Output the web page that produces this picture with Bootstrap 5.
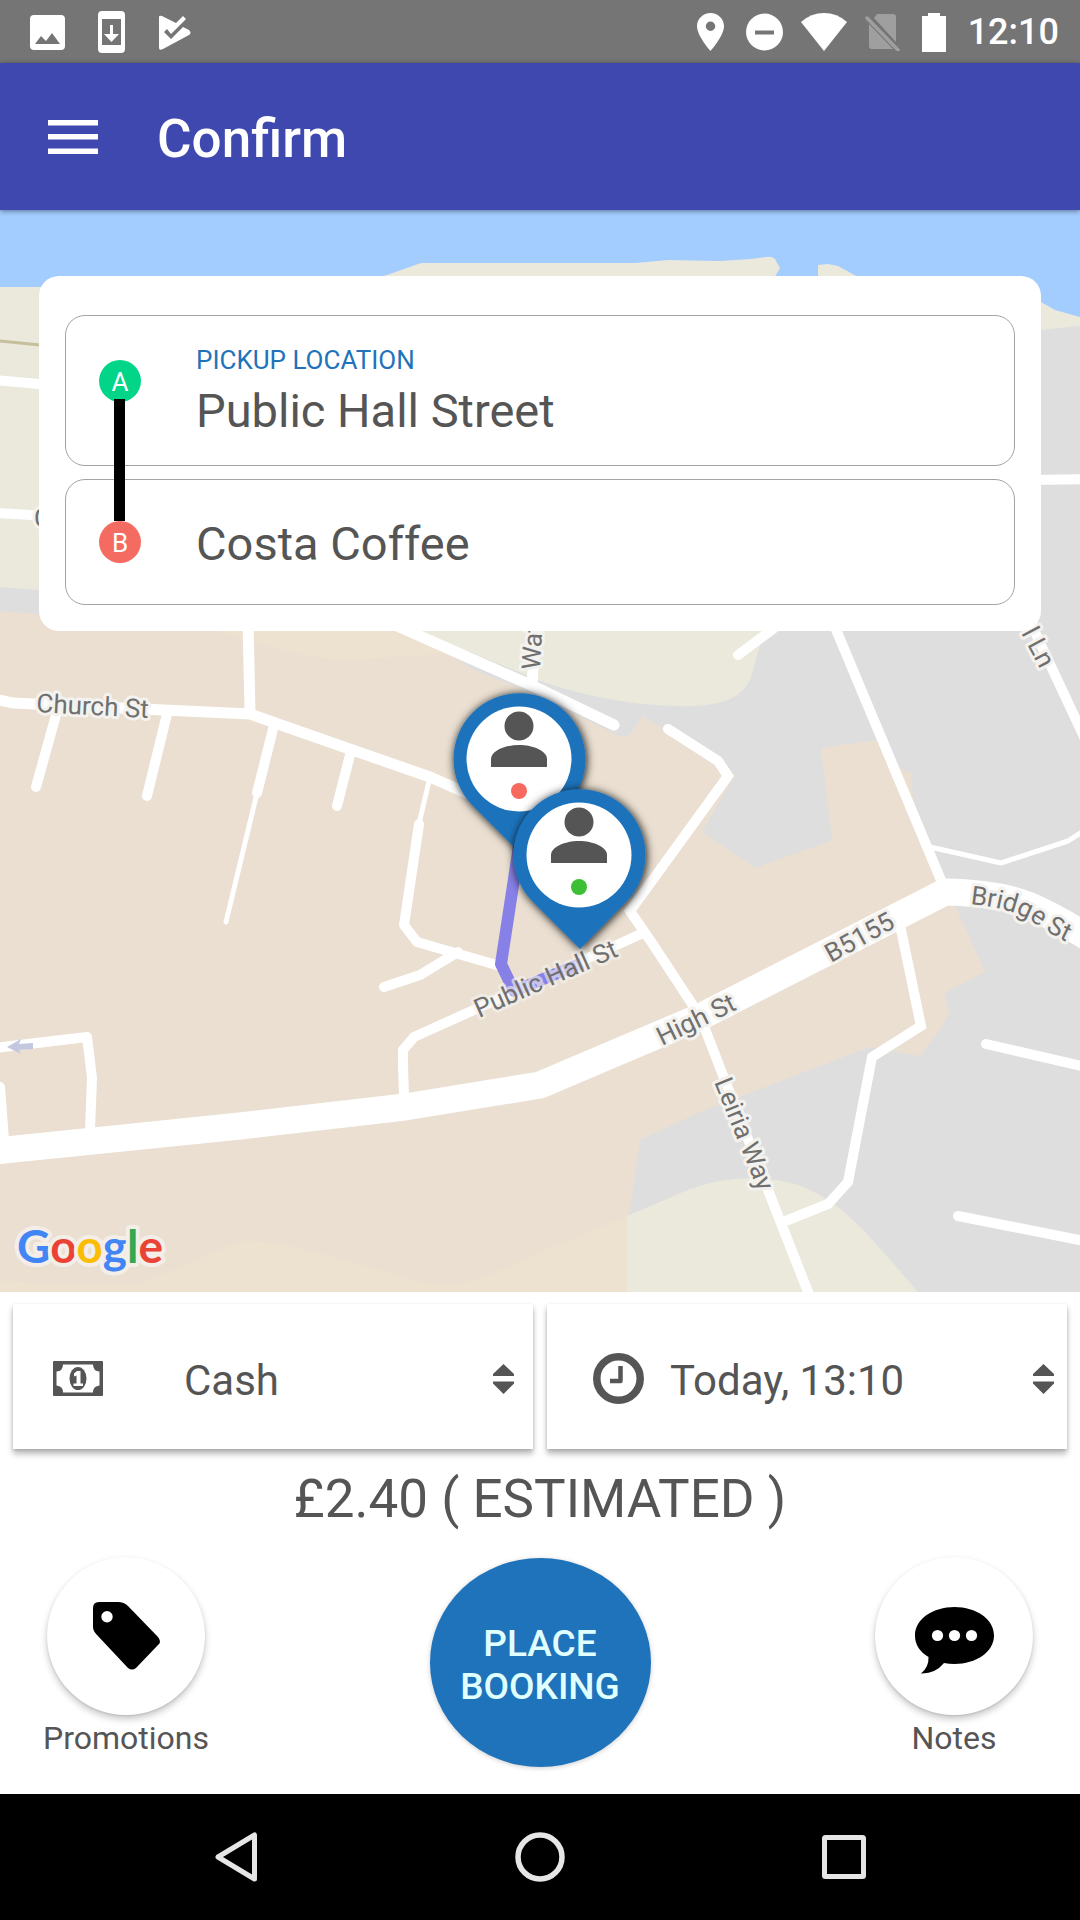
<!DOCTYPE html>
<html lang="en">
<head>
<meta charset="utf-8">
<meta name="viewport" content="width=device-width, initial-scale=1">
<title>Confirm</title>
<link href="https://cdn.jsdelivr.net/npm/bootstrap@5.3.0/dist/css/bootstrap.min.css" rel="stylesheet">
<style>
body { font-family: Roboto, "Noto Sans", sans-serif; color: #555; background: #fff; }
svg { display: block; flex: none; }
.status-strip { background: #757575; height: 63px; padding: 1px 21px 0 30px; font-size: 36px; line-height: 42px; }
.status-left { gap: 33px; }
.status-right { gap: 18px; }
.app-bar { background: #3f48af; height: 147px; padding: 0 48px; gap: 59px; box-shadow: 0 1px 5px rgba(0,0,0,.45); z-index: 2; }
.app-bar h1 { font-size: 53px; line-height: 60px; padding-top: 4px; }
.menu-btn { line-height: 0; }
.map-area { padding: 66px 39px; }
.map-canvas { inset: 0; width: 100%; height: 100%; }
.map-canvas text { font-family: Roboto, sans-serif; font-size: 26px; fill: #6f6f6f; stroke: #f4f2ee; stroke-width: 6px; stroke-linejoin: round; paint-order: stroke; }
.map-canvas .map-label-clear { stroke: rgba(244,242,238,.6); }
.map-canvas .map-brand { font-family: Lato, sans-serif; font-size: 46px; font-weight: 700; stroke: #f4eee8; stroke-width: 8px; }
.route-card { background: #fff; border-radius: 20px; padding: 39px 26px 26px; gap: 13px; }
.stop { border: 1px solid #a3a3a3; border-radius: 20px; padding: 29px 33px 26px; gap: 55px; }
.stop-end { padding: 36px 33px 32px; }
.stop label { color: #1f73bb; font-size: 26px; line-height: 30px; margin-bottom: 8px; }
.stop input { font-size: 47px; line-height: 56px; height: 56px; color: #555; background: none; outline: 0; }
.stop-dot { width: 42px; height: 42px; border-radius: 50%; color: #fff; font-size: 26px; line-height: 44px; flex: none; }
.dot-a { background: #02d587; margin-top: 15px; }
.dot-b { background: #f46c61; margin-bottom: 4px; }
.dot-a::after { content: ""; position: absolute; left: 15px; top: 39px; width: 11px; height: 122px; background: #000; }
.options { padding: 12px 13px 0; gap: 14px; }
.option { height: 145px; flex: 1 1 0; background: #fff; box-shadow: 0 5px 6px rgba(0,0,0,.27), 0 1px 3px rgba(0,0,0,.14); }
.option select { appearance: none; color: #555; font-size: 42px; line-height: 50px; outline: 0; background: none; }
.option-cash { padding: 4px 19px 0 40px; gap: 81px; }
.option-time { padding: 4px 13px 0 46px; gap: 26px; }
.option .choice { padding: 4px 0 0; }
.fare { font-size: 53px; line-height: 60px; margin: 20px 0 28px; }
.actions { padding: 0 45px 27px; }
.action { width: 162px; color: #555; font-size: 32px; line-height: 38px; gap: 4px; }
.action-disc { width: 158px; height: 158px; border-radius: 50%; background: #fff; box-shadow: 0 4px 7px rgba(0,0,0,.22), 0 1px 2px rgba(0,0,0,.1); }
.book-btn { width: 221px; height: 209px; margin-top: 1px; padding: 4px 0 0; border-radius: 50%; background: #1f73bb; color: #e0ffff; font-size: 37px; line-height: 43px; box-shadow: 0 1px 5px rgba(0,0,0,.2); }
.nav-strip { height: 126px; }
.nav-strip button { width: 304px; }
</style>
</head>
<body class="d-flex flex-column min-vh-100">

<div class="status-strip d-flex justify-content-between align-items-center text-white fw-medium">
  <div class="status-left d-flex align-items-center">
    <svg width="35" height="35" viewBox="0 0 35 35"><path fill="#fff" fill-rule="evenodd" d="M4 0H31Q35 0 35 4V31Q35 35 31 35H4Q0 35 0 31V4Q0 0 4 0ZM5 29H30L22 18L16 26L11 21Z"/></svg>
    <svg width="27" height="42" viewBox="0 0 27 42"><path fill="#fff" fill-rule="evenodd" d="M4 0H23Q27 0 27 4V38Q27 42 23 42H4Q0 42 0 38V4Q0 0 4 0ZM4 8V34H23V8ZM12 14H15V23H21L13.500 31L6 23H12Z"/></svg>
    <svg width="34" height="35" viewBox="0 0 34 35"><path fill="#fff" d="M1 2Q1 0 4 1L18 8L25 1L28 4L13 19L9 14L6 17L13 24L25 12L31 15Q34 18 31 20L5 34Q1 36 1 33Z"/></svg>
  </div>
  <div class="status-right d-flex align-items-center">
    <svg width="31" height="38" viewBox="0 0 31 38"><path fill="#fff" fill-rule="evenodd" d="M13.500 0C21 0 27 6 27 13C27 23 13.500 38 13.500 38C13.500 38 0 23 0 13C0 6 6 0 13.500 0ZM13.500 8.500A4.700 4.700 0 1 0 13.500 18A4.700 4.700 0 1 0 13.500 8.500Z"/></svg>
    <svg width="37" height="38" viewBox="0 0 37 38"><circle cx="18.500" cy="19" r="18.500" fill="#fff"/><path fill="#757575" d="M9 17.500H28V21.500H9Z"/></svg>
    <svg width="46" height="38" viewBox="0 0 46 38"><path fill="#fff" d="M0 9Q10 0 23 0T46 9L23 38Z"/></svg>
    <svg width="39" height="38" viewBox="0 0 39 38"><path fill="#9f9f9f" d="M12 1H28Q31 1 31 4V29L9 5ZM4 11L28 36H7Q4 36 4 33Z"/><path stroke="#9f9f9f" stroke-width="3.500" stroke-linecap="round" d="M2 5L33 37"/></svg>
    <svg width="28" height="39" viewBox="0 0 28 39"><path fill="#fff" d="M6 0H18V3H24V39H0V3H6Z"/></svg>
    <span>12:10</span>
  </div>
</div>

<header class="app-bar d-flex align-items-center text-white position-relative">
  <button type="button" class="menu-btn btn p-0 border-0" aria-label="Menu">
    <svg width="50" height="34" viewBox="0 0 50 34"><path fill="#fff" d="M0 0H50V5.500H0ZM0 14H50V19.500H0ZM0 28.500H50V34H0Z"/></svg>
  </button>
  <h1 class="m-0 fw-medium">Confirm</h1>
</header>

<main class="map-area position-relative flex-grow-1">
  <svg class="map-canvas position-absolute" viewBox="0 210 1080 1082" preserveAspectRatio="xMidYMid slice" role="img" aria-label="Map of the route">
    <defs>
      <filter id="pinShade" x="-30%" y="-30%" width="160%" height="160%"><feDropShadow dx="1" dy="1" stdDeviation="5" flood-color="#000" flood-opacity=".95"/></filter>
      <g id="pin">
        <path filter="url(#pinShade)" fill="#1f73bb" d="M-46 47A66 66 0 1 1 47 47L1 94Z"/>
        <circle r="52.500" fill="#fff"/>
        <circle cy="-33" r="14.500" fill="#555"/>
        <path fill="#555" d="M-28 8V0C-28 -8 -14 -14 0 -14S28 -8 28 0V8Z"/>
      </g>
      <path id="bridgePath" d="M970 904Q1014 908 1036 924T1088 951"/>
    </defs>
    <!-- land and water -->
    <path fill="#dedede" d="M0 210H1080V1292H0Z"/>
    <path fill="#ebe8dc" d="M0 210H1080V326L1040 330H500V600L39 590L0 587Z"/>
    <path fill="#a3ccff" d="M0 210H1080V317L1055 310L1041 302L860 278L838 266L828 264L818 265V280H773L780 268L775 259Q772 256 766 257L750 259L720 261L668 260L635 263H421L387 275L340 287H0Z"/>
    <path fill="#eadfd1" d="M0 611L39 614H400L470 668L540 697L619 736L628 737L643 716L665 730L735 775L702 832L756 868L832 840L821 748L875 740L905 772H911L913 800L950 892L958 912L985 972L944 993L949 1012L940 1030L920 1056L870 1047L700 1112L640 1140L629 1215L627 1292H0Z"/>
    <path fill="#ede1cf" d="M210 628Q300 660 345 659Q410 658 450 652L400 625Z"/>
    <path fill="#eae9dc" d="M385 625H768Q758 650 753 670Q747 704 695 706Q620 708 540 681L465 650Z"/>
    <path fill="#ede1cf" d="M0 1281Q100 1285 142 1283L235 1243Q250 1238 290 1246C360 1260 410 1285 450 1285Q470 1285 540 1252L627 1216V1292H0Z"/>
    <path fill="#eae9dc" d="M627 1216L690 1189Q745 1170 795 1184C840 1200 860 1225 918 1292H627Z"/>
    <path stroke="#c5bf9c" stroke-width="3" d="M0 341L50 346"/>
    <!-- streets -->
    <g fill="none" stroke="#fff" stroke-width="10" stroke-linecap="round" stroke-linejoin="round">
      <path d="M-5 380L50 385M-5 513L50 516M1030 480L1090 479"/>
      <path stroke-width="11" d="M-5 699L13 703L250 714L278 724L430 777L480 799M248 620L250 712"/>
      <path d="M56 715L36 787M167 714L147 796M274 725L257 793M350 755L337 806M419 824L404 925L417 942L500 966M458 952L420 975L384 987"/>
      <path stroke-width="5" d="M257 793L226 922M430 777L418 828"/>
      <path stroke-width="11" d="M395 625L535 687L614 725M532 685L536 620"/>
      <path stroke-linejoin="miter" d="M668 729L718 761L728 776L630 911L652 943L700 1016L724 1078L810 1297"/>
      <path d="M643 933L476 1009L414 1037L403 1050V1065L404 1098"/>
      <path stroke-width="27" d="M-15 1152L240 1126L405 1107L540 1085L700 1017L800 966L945 892Q1000 893 1030 906T1100 945"/>
      <path d="M832 620L943 885M1020 600L1086 741M738 655L785 620"/>
      <path stroke-width="5" d="M930 847L1001 863L1068 841L1085 830"/>
      <path stroke-linejoin="miter" d="M900 925L921 1026L872 1057L848 1182L828 1204L788 1220"/>
      <path d="M986 1044L1090 1068M958 1216L1090 1242M-5 1048L87 1037L92 1078L90 1130M0 1087L4 1140"/>
    </g>
    <path fill="#c4c8df" d="M7 1047L21 1039L19 1044L33 1043V1049L19 1050L21 1054Z"/>
    <path fill="none" stroke="#8780e6" stroke-width="12" stroke-linejoin="round" d="M523 820L501 964L514 991L582 963"/>
    <!-- street names -->
    <text x="34" y="527">C</text>
    <text transform="translate(36 712) rotate(3)">Church St</text>
    <text transform="translate(540 670) rotate(-87)">Wat</text>
    <text transform="translate(1021 633) rotate(62)">l Ln</text>
    <text transform="translate(479 1018) rotate(-24)" class="map-label-clear">Public Hall St</text>
    <text transform="translate(662 1046) rotate(-26)">High St</text>
    <text transform="translate(831 963) rotate(-29)">B5155</text>
    <text transform="translate(714 1082) rotate(68)">Leiria Way</text>
    <text><textPath href="#bridgePath">Bridge St</textPath></text>
    <text class="map-brand" x="17" y="1263"><tspan fill="#4285f4">G</tspan><tspan fill="#ea4335">o</tspan><tspan fill="#fbbc05">o</tspan><tspan fill="#4285f4">g</tspan><tspan fill="#34a853">l</tspan><tspan fill="#ea4335">e</tspan></text>
    <use href="#pin" x="519" y="759"/><circle cx="519" cy="791" r="8" fill="#f7695e"/>
    <use href="#pin" x="579" y="855"/><circle cx="579" cy="887" r="8" fill="#3cbf35"/>
  </svg>

  <form class="route-card d-flex flex-column position-relative">
    <div class="stop d-flex align-items-start">
      <span class="stop-dot dot-a position-relative text-center">A</span>
      <div class="flex-grow-1 d-flex flex-column">
        <label for="pickup">PICKUP LOCATION</label>
        <input id="pickup" type="text" class="border-0 p-0 w-100" value="Public Hall Street">
      </div>
    </div>
    <div class="stop stop-end d-flex align-items-center">
      <span class="stop-dot dot-b text-center">B</span>
      <input id="dropoff" type="text" class="border-0 p-0 w-100" value="Costa Coffee" aria-label="Drop-off location">
    </div>
  </form>
</main>

<section class="bg-white">
  <div class="options d-flex">
    <div class="option option-cash d-flex align-items-center">
      <svg width="50" height="35" viewBox="0 0 50 35"><path fill="#555" fill-rule="evenodd" d="M1 0H49Q50 0 50 1V34Q50 35 49 35H1Q0 35 0 34V1Q0 0 1 0ZM10 3.500Q10 10 3.500 10.500V24.500Q10 25 10 31.500H40Q40 25 46.500 24.500V10.500Q40 10 40 3.500Z"/><ellipse cx="25" cy="17.500" rx="8.500" ry="11.500" fill="#555"/><path fill="#fff" d="M24 10H27.500V22.500H30V25H20.500V22.500H23.500V14.500L21 15.500V12.500Z"/></svg>
      <select class="choice border-0 flex-grow-1" aria-label="Payment method"><option>Cash</option></select>
      <svg width="21" height="30" viewBox="0 0 21 30"><path fill="#555" d="M10.500 0L21 10V12H0V10ZM0 17.500H21V19.500L10.500 30L0 19.500Z"/></svg>
    </div>
    <div class="option option-time d-flex align-items-center">
      <svg width="51" height="51" viewBox="0 0 51 51"><circle cx="25.500" cy="25.500" r="21.700" fill="none" stroke="#555" stroke-width="7.500"/><path fill="none" stroke="#555" stroke-width="4.500" stroke-linejoin="round" d="M17 28H27.500V13"/></svg>
      <select class="choice border-0 flex-grow-1" aria-label="Pickup time"><option>Today, 13:10</option></select>
      <svg width="21" height="30" viewBox="0 0 21 30"><path fill="#555" d="M10.500 0L21 10V12H0V10ZM0 17.500H21V19.500L10.500 30L0 19.500Z"/></svg>
    </div>
  </div>
  <p class="fare text-center">£2.40 ( ESTIMATED )</p>
  <div class="actions d-flex justify-content-between align-items-start">
    <button type="button" class="action btn p-0 border-0 d-flex flex-column align-items-center">
      <span class="action-disc d-flex align-items-center justify-content-center">
        <svg width="67" height="68" viewBox="0 0 67 68"><path fill="#000" fill-rule="evenodd" d="M6 0H25Q31 0 35 4L65 35Q69 40 65 43L43 66Q39 69 35 66L4 33Q0 29 0 25V6Q0 0 6 0ZM14 9A5.700 5.700 0 1 0 14 20.400A5.700 5.700 0 1 0 14 9Z"/></svg>
      </span>
      <span>Promotions</span>
    </button>
    <button type="button" class="book-btn btn border-0 fw-medium">PLACE<br>BOOKING</button>
    <button type="button" class="action btn p-0 border-0 d-flex flex-column align-items-center">
      <span class="action-disc d-flex align-items-center justify-content-center">
        <svg width="79" height="75" viewBox="0 -8 79 75"><path fill="#000" d="M39.500 0C61 0 79 12 79 28.500S61 57 39.500 57Q34 57 29 56Q20 67 6 66.500Q14 60 13.500 50Q0 42 0 28.500C0 12 18 0 39.500 0Z"/><g fill="#fff"><circle cx="22.500" cy="28.500" r="5.600"/><circle cx="39.500" cy="28.500" r="5.600"/><circle cx="56.500" cy="28.500" r="5.600"/></g></svg>
      </span>
      <span>Notes</span>
    </button>
  </div>
</section>

<nav class="nav-strip bg-black d-flex justify-content-center align-items-stretch" aria-label="System">
  <button type="button" class="btn p-0 border-0 d-flex align-items-center justify-content-center" aria-label="Back"><svg width="42" height="50" viewBox="0 0 42 50"><path fill="none" stroke="#e6e6e6" stroke-width="5" stroke-linejoin="round" d="M39.500 3V47L3 25Z"/></svg></button>
  <button type="button" class="btn p-0 border-0 d-flex align-items-center justify-content-center" aria-label="Home"><svg width="50" height="50" viewBox="0 0 50 50"><circle cx="25" cy="25" r="22" fill="none" stroke="#e6e6e6" stroke-width="5.500"/></svg></button>
  <button type="button" class="btn p-0 border-0 d-flex align-items-center justify-content-center" aria-label="Recent apps"><svg width="44" height="44" viewBox="0 0 44 44"><rect x="2.500" y="2.500" width="39" height="39" rx="1" fill="none" stroke="#e6e6e6" stroke-width="5" stroke-linejoin="round"/></svg></button>
</nav>

<script src="https://cdn.jsdelivr.net/npm/bootstrap@5.3.0/dist/js/bootstrap.bundle.min.js"></script>
</body>
</html>
